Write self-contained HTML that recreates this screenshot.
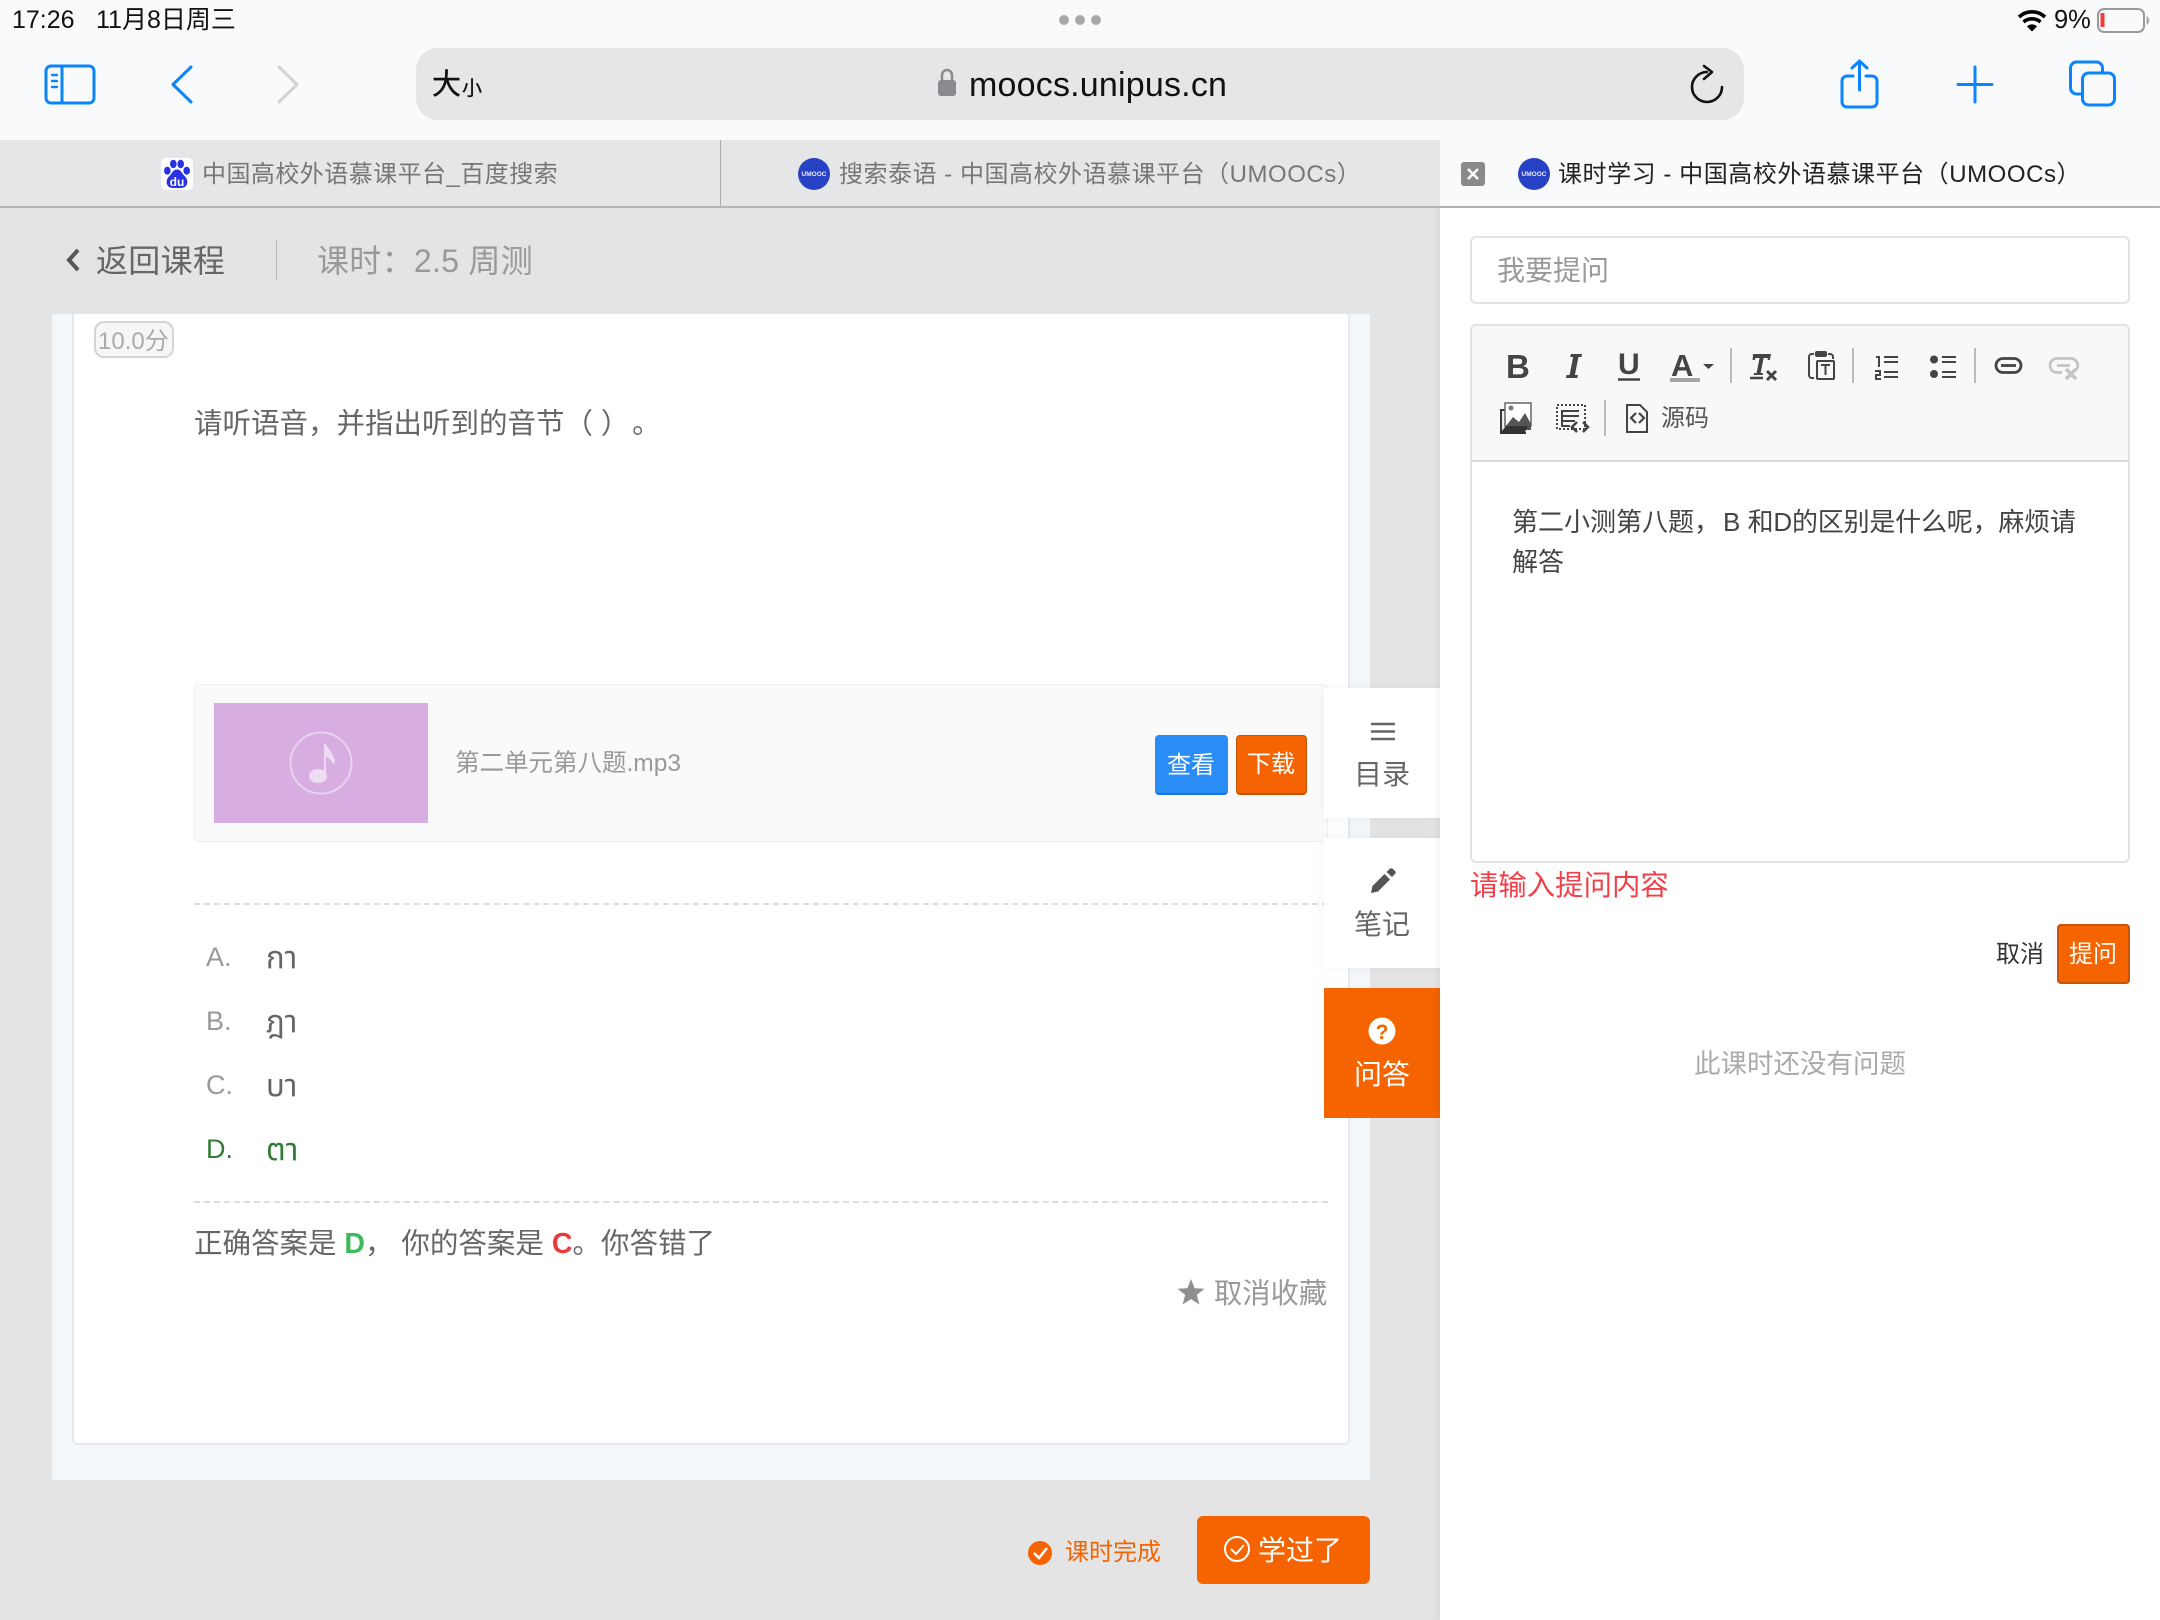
<!DOCTYPE html>
<html lang="zh"><head><meta charset="utf-8"><title>课时学习</title>
<style>
html,body{margin:0;padding:0;width:2160px;height:1620px;overflow:hidden;background:#e4e4e4}
body{position:relative;font-family:"Liberation Sans","Noto Sans CJK SC",sans-serif;color:#666}
.b{position:absolute;box-sizing:border-box}
.t{position:absolute;white-space:nowrap;line-height:1}
.th{font-family:"Liberation Sans","Noto Sans Thai","Noto Sans Thai Looped","Tlwg Typist","Loma","Garuda","Waree","DejaVu Sans","Noto Sans CJK SC",sans-serif}
svg{position:absolute;left:0;top:0}
</style></head><body>
<!-- top chrome -->
<div class="b" style="left:0;top:0;width:2160px;height:140px;background:#f9fafb"></div>
<div class="b" style="left:416px;top:48px;width:1328px;height:72px;background:#e5e6e7;border-radius:22px"></div>
<div class="b" style="left:0;top:140px;width:1440px;height:66px;background:#e5e6e7"></div>
<div class="b" style="left:720px;top:140px;width:1px;height:66px;background:#aaa"></div>
<div class="b" style="left:1440px;top:140px;width:720px;height:66px;background:#f9fafb"></div>
<div class="b" style="left:0;top:206px;width:2160px;height:2px;background:#b4b4b4"></div>
<!-- left content -->
<div class="b" style="left:52px;top:314px;width:1318px;height:1166px;background:#f4f7fa"></div>
<div class="b" style="left:72px;top:314px;width:1278px;height:1131px;background:#fff;border:solid #e4e9f0;border-width:0 2px 2px 2px;border-radius:0 0 6px 6px"></div>
<div class="b" style="left:94px;top:321px;width:80px;height:37px;background:#f6f6f6;border:2px solid #d4d4d4;border-radius:10px"></div>
<div class="b" style="left:194px;top:684px;width:1134px;height:158px;background:#fafafa;border:1px solid #f0f0f0;border-radius:4px"></div>
<div class="b" style="left:214px;top:703px;width:214px;height:120px;background:#d8aee2"></div>
<div class="b" style="left:1155px;top:735px;width:73px;height:60px;background:#2a8cf5;border-bottom:2px solid #1477dd;border-radius:4px"></div>
<div class="b" style="left:1236px;top:735px;width:71px;height:60px;background:#f56400;border:1px solid #c8510a;border-bottom-width:2px;border-radius:4px"></div>
<div class="b" style="left:194px;top:903px;width:1134px;border-top:2px dashed #dedede"></div>
<div class="b" style="left:194px;top:1201px;width:1134px;border-top:2px dashed #dedede"></div>
<!-- side nav -->
<div class="b" style="left:1324px;top:688px;width:116px;height:130px;background:#fff;box-shadow:0 0 12px rgba(0,0,0,.05)"></div>
<div class="b" style="left:1324px;top:838px;width:116px;height:130px;background:#fff;box-shadow:0 0 12px rgba(0,0,0,.05)"></div>
<div class="b" style="left:1324px;top:988px;width:116px;height:130px;background:#f56400"></div>
<!-- footer button -->
<div class="b" style="left:1197px;top:1516px;width:173px;height:68px;background:#f56400;border-radius:6px"></div>
<!-- right panel -->
<div class="b" style="left:1440px;top:208px;width:720px;height:1412px;background:#fff;box-shadow:-3px 0 6px rgba(0,0,0,.05)"></div>
<div class="b" style="left:1470px;top:236px;width:660px;height:68px;background:#fff;border:2px solid #e2e2e2;border-radius:6px"></div>
<div class="b" style="left:1470px;top:324px;width:660px;height:539px;background:#fff;border:2px solid #e2e2e2;border-radius:6px"></div>
<div class="b" style="left:1472px;top:326px;width:656px;height:136px;background:#f8f8f8;border-bottom:2px solid #d8d8d8;border-radius:4px 4px 0 0"></div>
<div class="b" style="left:2057px;top:924px;width:73px;height:60px;background:#f56400;border:2px solid #c8540a;border-radius:4px"></div>

<svg width="2160" height="1620" viewBox="0 0 2160 1620" fill="none">
<!-- dots -->
<g fill="#a8a8aa"><circle cx="1064" cy="20" r="5"/><circle cx="1080" cy="20" r="5"/><circle cx="1096" cy="20" r="5"/></g>
<!-- wifi -->
<g stroke="#000" stroke-width="3.6"><path d="M2019 17A19 19 0 0 1 2045 17"/><path d="M2023.5 22A13 13 0 0 1 2040.5 22"/></g><path d="M2027 26.500A7 7 0 0 1 2037 26.500L2032 31.500Z" fill="#000"/>
<!-- battery -->
<rect x="2098" y="9" width="46" height="23" rx="6" stroke="#999" stroke-width="2"/><rect x="2100.500" y="13" width="4" height="14" fill="#f33b3b"/><path d="M2146.500 16a5 5 0 0 1 0 9z" fill="#aaa"/>
<!-- toolbar -->
<g stroke="#0a84ff" stroke-width="3" stroke-linecap="round" stroke-linejoin="round">
<rect x="46" y="66" width="48" height="37" rx="5"/><path d="M62 66V103"/><path d="M52 75h5M52 81h5M52 87h5" stroke-width="2.4"/>
<path d="M191 67L173 84.5L191 102" stroke-width="3"/>
<path d="M1853 76h-6a5 5 0 0 0-5 5v21a5 5 0 0 0 5 5h25a5 5 0 0 0 5-5v-21a5 5 0 0 0-5-5h-6"/><path d="M1859.5 90V61M1852 68l7.500-7 7.500 7"/>
<path d="M1975 67V102M1958 84.500H1992"/>
<path d="M2081.500 94h-5a6 6 0 0 1-6-6V68a6 6 0 0 1 6-6h20a6 6 0 0 1 6 6v5"/><rect x="2082.500" y="73" width="32" height="32" rx="6"/>
</g>
<path d="M279 67L297 84.5L279 102" stroke="#d2d3d5" stroke-width="3" stroke-linecap="round" stroke-linejoin="round"/>
<rect x="938" y="80" width="18" height="16" rx="3" fill="#8b8b8f"/><path d="M942 81v-6a5 5 0 0 1 10 0v6" stroke="#8b8b8f" stroke-width="2.500"/>
<path d="M1707 72A15 15 0 1 0 1722 87" stroke="#111" stroke-width="2.600" stroke-linecap="round"/><path d="M1704 66L1712 72L1704 79" stroke="#111" stroke-width="2.600" stroke-linecap="round" stroke-linejoin="round"/>
<!-- baidu favicon -->
<rect x="161" y="158" width="32" height="32" rx="5" fill="#fff"/>
<g fill="#2932e1"><ellipse cx="173.300" cy="164" rx="3.300" ry="4.200"/><ellipse cx="180.700" cy="164" rx="3.300" ry="4.200"/><ellipse cx="167.300" cy="170.700" rx="3.300" ry="4"/><ellipse cx="186.700" cy="170.700" rx="3.300" ry="4"/><path d="M177 169.500c4 0 5 4 8 7 4 4 3 11.500-4 11.500h-8c-7 0-8-7.500-4-11.500 3-3 4-7 8-7z"/></g>
<text x="177" y="186" text-anchor="middle" font-size="12" font-weight="700" fill="#fff" font-family="Liberation Sans">du</text>
<!-- umooc icons -->
<g><ellipse cx="814" cy="174" rx="16" ry="16" fill="#2742c4"/><text x="814" y="176" text-anchor="middle" font-size="6.500" font-weight="700" fill="#e8ecff" font-family="Liberation Sans">UMOOC</text>
<ellipse cx="1534" cy="174" rx="16" ry="16" fill="#2742c4"/><text x="1534" y="176" text-anchor="middle" font-size="6.500" font-weight="700" fill="#e8ecff" font-family="Liberation Sans">UMOOC</text></g>
<!-- close box -->
<rect x="1461" y="162" width="24" height="24" rx="3" fill="#8a8a8a"/><path d="M1468 169l10 10M1478 169l-10 10" stroke="#fff" stroke-width="2.500"/>
<!-- back chevron / note -->
<path d="M78 250L69 260L78 270" stroke="#555" stroke-width="4"/>
<circle cx="321" cy="763" r="30.500" stroke="#e9d3ef" stroke-width="2"/>
<ellipse cx="318" cy="776" rx="9" ry="7" fill="#eedcf2"/><path d="M325 776V744c2 6 8 9 9 19-3-5-6-7-9-8" fill="#eedcf2" stroke="#eedcf2" stroke-width="2"/>
<!-- nav icons -->
<path d="M1371 724h24M1371 731.500h24M1371 739h24" stroke="#666" stroke-width="2.500"/>
<path d="M1371 893l1.500-7 12-12 5.500 5.500-12 12zM1386.500 872l3-3c1.500-1 2.500-1 3.500 0l2 2c1 1 1 2 0 3l-3 3z" fill="#555"/>
<circle cx="1382" cy="1031" r="13.500" fill="#fff"/><text x="1382" y="1039" text-anchor="middle" font-size="21" font-weight="700" fill="#f56400" font-family="Liberation Sans">?</text>
<!-- star -->
<path d="M1191 1279l3.600 9.200 9.900.5-7.700 6.200 2.600 9.600-8.400-5.400-8.400 5.400 2.600-9.600-7.700-6.200 9.900-.5z" fill="#8f8f8f"/>
<!-- complete -->
<circle cx="1040" cy="1553" r="12" fill="#f56400"/><path d="M1034 1553l5 5 8-10" stroke="#fff" stroke-width="2.500"/>
<circle cx="1237" cy="1549" r="12" stroke="#fff" stroke-width="2"/><path d="M1231 1549l5 5 8-9" stroke="#fff" stroke-width="2"/>
<!-- editor toolbar -->
<g fill="#444" font-family="Liberation Sans" font-weight="700">
<text x="1506" y="378" font-size="33">B</text>
<text x="1618" y="374" font-size="30">U</text>
<text x="1671" y="376" font-size="31">A</text>
</g>
<!-- italic I slab -->
<path d="M1571 354h11l-.6 3h-3l-3.500 18h3l-.6 3h-11.300l.6-3h3l3.500-18h-3z" fill="#444"/>
<!-- Tx T slab -->
<path d="M1753 354h18l-1.200 6h-2l-.2-2h-4l-3 15h2.500l-.4 2h-9l.4-2h2.500l3-15h-4l-1 2h-2z" fill="#444"/>
<path d="M1618 379.500h22" stroke="#444" stroke-width="2.500"/>
<rect x="1670" y="378" width="30" height="4" fill="#a4a4a4"/>
<path d="M1703 364h11l-5.500 5z" fill="#444"/>
<path d="M1750 378h13" stroke="#444" stroke-width="2.500"/>
<path d="M1767 371l9 9M1776 371l-9 9" stroke="#444" stroke-width="3"/>
<path d="M1731 348v35M1853 348v35M1975 348v35M1605 400v36" stroke="#bbb" stroke-width="2"/>
<!-- paste -->
<path d="M1814 354h-2a3 3 0 0 0-3 3v18a3 3 0 0 0 3 3h2M1828 354h2a3 3 0 0 1 3 3v2" stroke="#444" stroke-width="2"/>
<rect x="1815" y="351" width="12" height="6" rx="2" fill="#444"/>
<rect x="1817" y="361" width="17" height="18" rx="1" stroke="#444" stroke-width="2"/><path d="M1821 365h9M1825.500 365v10" stroke="#444" stroke-width="2"/>
<!-- OL -->
<path d="M1884 357h14M1884 362h14M1884 372h14M1884 377h14" stroke="#444" stroke-width="2"/>
<path d="M1876 357h3v10M1875 371h5v4h-4v4h5" stroke="#444" stroke-width="2"/>
<!-- UL -->
<circle cx="1934" cy="359.500" r="4" fill="#444"/><circle cx="1934" cy="374" r="4" fill="#444"/>
<path d="M1942 357h14M1942 362h14M1942 372h14M1942 377h14" stroke="#444" stroke-width="2"/>
<!-- link -->
<rect x="1996" y="358.500" width="25" height="14" rx="7" stroke="#444" stroke-width="2.800"/><path d="M2001 365.500h15" stroke="#444" stroke-width="2.800"/>
<path d="M2064 358.500h-7a7 7 0 0 0 0 14h5M2064 358.500h7a7 7 0 0 1 5.500 11" stroke="#c4c4c4" stroke-width="2.800"/><path d="M2057 365.500h13" stroke="#c4c4c4" stroke-width="2.800"/><path d="M2066 369l10 10M2076 369l-10 10" stroke="#c4c4c4" stroke-width="3.500"/>
<!-- image -->
<rect x="1500" y="409" width="26" height="25" fill="#3a3a3a"/><rect x="1502" y="411" width="24" height="21" fill="#eee"/>
<rect x="1505" y="403" width="26" height="23" fill="#fff" stroke="#666" stroke-width="1.500"/>
<path d="M1506 426l7-9 6 5 6-9 6 11v6h-25z" fill="#555"/><path d="M1501 432l5-6h22l-4 8h-23z" fill="#333"/><circle cx="1511" cy="408" r="2.500" fill="#777"/>
<!-- template -->
<rect x="1557" y="405" width="28" height="24" stroke="#444" stroke-width="2" stroke-dasharray="2 2"/>
<path d="M1579 411h-17v15h8M1562 416h17M1562 421h13" stroke="#444" stroke-width="2"/>
<path d="M1577 422l-5 5 5 5M1583 422l5 5-5 5" stroke="#444" stroke-width="2.500"/>
<!-- source -->
<path d="M1627 405h13l7 7v20h-20z" stroke="#444" stroke-width="2"/><path d="M1636 413l-5 5 5 5M1639 413l5 5-5 5" stroke="#444" stroke-width="2.200"/>
</svg>

<!-- text -->
<span class="t" style="left:12px;top:8px;font-size:25px;color:#111">17:26</span>
<span class="t" style="left:96px;top:8px;font-size:25px;color:#111">11月8日周三</span>
<span class="t" style="left:2054px;top:8px;font-size:25.500px;color:#111">9%</span>
<span class="t" style="left:432px;top:71px;font-size:29px;color:#111;-webkit-text-stroke:.4px #111">大</span><span class="t" style="left:462px;top:79px;font-size:20px;color:#111;-webkit-text-stroke:.3px #111">小</span>
<span class="t" style="left:969px;top:68px;font-size:34px;color:#111;letter-spacing:.2px">moocs.unipus.cn</span>
<span class="t" style="left:202px;top:163px;font-size:24px;color:#777;letter-spacing:.45px">中国高校外语慕课平台_百度搜索</span>
<span class="t" style="left:839px;top:163px;font-size:24px;color:#777;letter-spacing:.52px">搜索泰语 - 中国高校外语慕课平台（UMOOCs）</span>
<span class="t" style="left:1558px;top:163px;font-size:24px;color:#222;letter-spacing:.55px">课时学习 - 中国高校外语慕课平台（UMOOCs）</span>

<span class="t" style="left:96px;top:245px;font-size:32px;color:#666;letter-spacing:.3px">返回课程</span>
<div class="b" style="left:276px;top:240px;width:1px;height:40px;background:#bbb"></div>
<span class="t" style="left:317px;top:245px;font-size:32px;color:#999;letter-spacing:.3px">课时：2.5 周测</span>

<span class="t" style="left:98px;top:330px;font-size:24px;color:#aaa">10.0分</span>
<span class="t" style="left:194px;top:410px;font-size:28.500px;color:#666">请听语音，并指出听到的音节（ ）<span style="margin-left:17px">。</span></span>
<span class="t" style="left:455px;top:752px;font-size:24.500px;color:#999">第二单元第八题.mp3</span>
<span class="t" style="left:1167px;top:754px;font-size:24px;color:#fff">查看</span>
<span class="t" style="left:1247px;top:753px;font-size:24px;color:#fff">下载</span>
<span class="t" style="left:1354px;top:761px;font-size:28px;color:#666">目录</span>
<span class="t" style="left:1354px;top:911px;font-size:28px;color:#666">笔记</span>
<span class="t" style="left:1354px;top:1061px;font-size:28px;color:#fff">问答</span>

<span class="t" style="left:206px;top:944px;font-size:27px;color:#999">A.</span><span class="t th" style="left:266px;top:942px;font-size:31px;color:#666">กา</span>
<span class="t" style="left:206px;top:1008px;font-size:27px;color:#999">B.</span><span class="t th" style="left:266px;top:1006px;font-size:31px;color:#666">ฎา</span>
<span class="t" style="left:206px;top:1072px;font-size:27px;color:#999">C.</span><span class="t th" style="left:266px;top:1070px;font-size:31px;color:#666">บา</span>
<span class="t" style="left:206px;top:1136px;font-size:27px;color:#2f7d32">D.</span><span class="t th" style="left:266px;top:1134px;font-size:31px;color:#2f7d32">ตา</span>

<span class="t" style="left:194px;top:1230px;font-size:28.500px;color:#666">正确答案是 <b style="color:#3dbb5a">D</b>， 你的答案是 <b style="color:#e83a3a">C</b>。你答错了</span>
<span class="t" style="left:1214px;top:1279px;font-size:28.300px;color:#999">取消收藏</span>
<span class="t" style="left:1065px;top:1541px;font-size:24px;color:#f56400">课时完成</span>
<span class="t" style="left:1258px;top:1537px;font-size:28px;color:#fff">学过了</span>

<span class="t" style="left:1497px;top:257px;font-size:28px;color:#999">我要提问</span>
<span class="t" style="left:1661px;top:407px;font-size:24px;color:#555">源码</span>
<span class="t" style="left:1512px;top:509px;font-size:26px;color:#444">第二小测第八题，<span style="margin-left:3px">B</span> <span style="letter-spacing:-.2px">和D的区别是什么呢，麻烦请</span></span>
<span class="t" style="left:1512px;top:549px;font-size:26px;color:#444">解答</span>
<span class="t" style="left:1470px;top:872px;font-size:28.400px;color:#f0404a">请输入提问内容</span>
<span class="t" style="left:1996px;top:943px;font-size:24px;color:#333">取消</span>
<span class="t" style="left:2069px;top:943px;font-size:24px;color:#fff">提问</span>
<span class="t" style="left:1694px;top:1051px;font-size:26.500px;color:#aaa">此课时还没有问题</span>
</body></html>
